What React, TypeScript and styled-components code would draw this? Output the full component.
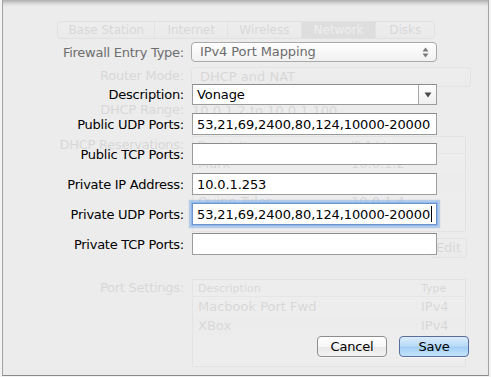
import React from "react";
import styled, { createGlobalStyle } from "styled-components";

const Global = createGlobalStyle`
  html, body { margin: 0; padding: 0; background: #f3f3f3; }
  body { font-family: "DejaVu Sans", "Liberation Sans", sans-serif; -webkit-font-smoothing: antialiased; }
  * { box-sizing: border-box; }
`;

const Page = styled.div`
  width: 491px;
  height: 377px;
  background: #f3f3f3;
  overflow: hidden;
`;

const Frame = styled.div`
  position: relative;
  margin-left: 2px;
  width: 487px;
  height: 376px;
  background: #ececec;
  border-left: 1px solid #a3a3a3;
  border-right: 1px solid #a3a3a3;
  border-bottom: 1px solid #8a8a8a;
  box-shadow: inset 0 6px 5px -4px rgba(0, 0, 0, 0.32);
`;

/* ---------- the window behind the sheet (faded) ---------- */

const Ghost = styled.div`
  opacity: 0.085;
  padding-top: 21px;
  display: flex;
  flex-direction: column;
  font-size: 13px;
  color: #000;
`;

const Tabs = styled.div`
  display: flex;
  margin-left: 54px;
  width: 378px;
  height: 18px;
  border: 1px solid #777;
  border-radius: 4px;
  overflow: hidden;
  background: linear-gradient(#ffffff, #dcdcdc);
`;

const Tab = styled.div<{ $w: number; $on?: boolean }>`
  width: ${(p) => p.$w}px;
  display: flex;
  align-items: center;
  justify-content: center;
  font-size: 12px;
  border-right: 1px solid #888;
  background: ${(p) => (p.$on ? "#5a5a5a" : "transparent")};
  color: ${(p) => (p.$on ? "#fff" : "#000")};
  &:last-child { border-right: none; }
`;

const GRow = styled.div<{ $mt: number; $h: number }>`
  display: flex;
  align-items: center;
  gap: 8px;
  margin-top: ${(p) => p.$mt}px;
  height: ${(p) => p.$h}px;
`;

const GLabel = styled.div`
  width: 181px;
  text-align: right;
  letter-spacing: -0.25px;
  align-self: flex-start;
  line-height: 18px;
`;

const GPopup = styled.div`
  width: 280px;
  height: 20px;
  margin-left: -1px;
  border: 1px solid #888;
  border-radius: 4px;
  padding-left: 8px;
  line-height: 18px;
  background: linear-gradient(#fff, #e6e6e6);
`;

const GTable = styled.div<{ $h: number }>`
  width: 274px;
  height: ${(p) => p.$h}px;
  border: 1px solid #888;
  background: #fff;
  display: flex;
  flex-direction: column;
  font-size: 12px;
`;

const GTRow = styled.div<{ $head?: boolean; $alt?: boolean }>`
  display: flex;
  height: ${(p) => (p.$head ? 17 : 19)}px;
  align-items: center;
  background: ${(p) => (p.$alt ? "#edf3fe" : "transparent")};
  border-bottom: ${(p) => (p.$head ? "1px solid #aaa" : "none")};
  font-size: ${(p) => (p.$head ? 11 : 13)}px;
`;

const GCell = styled.div<{ $w?: number }>`
  padding-left: 5px;
  ${(p) => (p.$w ? `width: ${p.$w}px;` : "flex: 1;")}
`;

const GEditRow = styled.div`
  display: flex;
  justify-content: flex-end;
  margin-top: 6px;
  padding-right: 21px;
`;

const GButton = styled.div`
  width: 37px;
  height: 20px;
  border: 1px solid #888;
  border-radius: 4px;
  text-align: center;
  line-height: 18px;
  background: linear-gradient(#fff, #e0e0e0);
`;

/* ---------- the sheet ---------- */

const Sheet = styled.div`
  position: absolute;
  inset: 0;
  display: flex;
  flex-direction: column;
  padding-top: 42px;
  font-size: 13px;
  color: #000;
`;

const Row = styled.div<{ $mt: number; $h: number }>`
  display: flex;
  align-items: center;
  gap: 8px;
  margin-top: ${(p) => p.$mt}px;
  height: ${(p) => p.$h}px;
`;

const Label = styled.div<{ $dim?: boolean }>`
  width: 181px;
  text-align: right;
  letter-spacing: -0.25px;
  color: ${(p) => (p.$dim ? "#6e6e6e" : "#000")};
`;

const Popup = styled.div`
  position: relative;
  width: 246px;
  height: 20px;
  margin-left: -1px;
  border: 1px solid #a9a9a9;
  border-radius: 4px;
  padding-left: 8px;
  line-height: 18px;
  color: #6c6c6c;
  letter-spacing: -0.1px;
  background: linear-gradient(#fefefe, #f1f1f1);
  display: flex;
  align-items: center;
  justify-content: space-between;
  padding-right: 7px;
`;

const Field = styled.div<{ $h: number; $focus?: boolean }>`
  width: 245px;
  height: ${(p) => p.$h}px;
  background: #fff;
  border: 1px solid ${(p) => (p.$focus ? "#6d94cc" : "#9c9c9c")};
  border-top-color: ${(p) => (p.$focus ? "#6d94cc" : "#8c8c8c")};
  box-shadow: ${(p) =>
    p.$focus ? "0 0 0 1px #8fb7ec, 0 0 1px 3px rgba(132, 176, 232, 0.55)" : "none"};
  display: flex;
  align-items: center;
  padding-left: 4px;
  letter-spacing: -0.1px;
  white-space: nowrap;
  overflow: hidden;
`;

const ComboText = styled.div`
  flex: 1;
`;

const ComboButton = styled.div`
  width: 18px;
  align-self: stretch;
  border-left: 1px solid #a9a9a9;
  background: linear-gradient(#ffffff, #efefef);
  display: flex;
  align-items: center;
  justify-content: center;
`;

const Caret = styled.span`
  display: inline-block;
  width: 1px;
  height: 16px;
  background: #000;
  margin-left: 1px;
`;

const Buttons = styled.div`
  margin-top: auto;
  display: flex;
  justify-content: flex-end;
  gap: 12px;
  padding: 0 19px 18px 0;
`;

const Button = styled.div<{ $primary?: boolean }>`
  width: 70px;
  height: 21px;
  border-radius: 4px;
  border: 1px solid ${(p) => (p.$primary ? "#5a6e9e" : "#8d8d8d")};
  background: ${(p) =>
    p.$primary
      ? "linear-gradient(#dcecfb 0%, #b9dbf8 45%, #a3cff5 55%, #c4e4fd 100%)"
      : "linear-gradient(#ffffff 0%, #f7f7f7 50%, #e9e9e9 55%, #f3f3f3 100%)"};
  box-shadow: 0 1px 0 rgba(255, 255, 255, 0.6);
  display: flex;
  align-items: center;
  justify-content: center;
  font-size: 13px;
  letter-spacing: -0.2px;
  color: #000;
`;

const Stepper = () => (
  <svg width="7" height="11" viewBox="0 0 7 11">
    <path d="M3.5 0.5 L6.5 4.5 H0.5 Z" fill="#7a7a7a" />
    <path d="M3.5 10.5 L6.5 6.5 H0.5 Z" fill="#7a7a7a" />
  </svg>
);

const DownArrow = () => (
  <svg width="8" height="6" viewBox="0 0 8 6">
    <path d="M0.5 0.5 H7.5 L4 5.5 Z" fill="#4a4a4a" />
  </svg>
);

const fields: { label: string; value: string; focus?: boolean }[] = [
  { label: "Public UDP Ports:", value: "53,21,69,2400,80,124,10000-20000" },
  { label: "Public TCP Ports:", value: "" },
  { label: "Private IP Address:", value: "10.0.1.253" },
  { label: "Private UDP Ports:", value: "53,21,69,2400,80,124,10000-20000", focus: true },
  { label: "Private TCP Ports:", value: "" },
];

export default function App() {
  return (
    <Page>
      <Global />
      <Frame>
        <Ghost aria-hidden>
          <Tabs>
            <Tab $w={98}>Base Station</Tab>
            <Tab $w={73}>Internet</Tab>
            <Tab $w={74}>Wireless</Tab>
            <Tab $w={75} $on>Network</Tab>
            <Tab $w={58}>Disks</Tab>
          </Tabs>
          <GRow $mt={28} $h={20}>
            <GLabel>Router Mode:</GLabel>
            <GPopup>DHCP and NAT</GPopup>
          </GRow>
          <GRow $mt={14} $h={18}>
            <GLabel>DHCP Range:</GLabel>
            <div>10.0.1.2 to 10.0.1.100</div>
          </GRow>
          <GRow $mt={17} $h={96}>
            <GLabel>DHCP Reservations:</GLabel>
            <GTable $h={96}>
              <GTRow $head>
                <GCell $w={153}>Description</GCell>
                <GCell>IP Address</GCell>
              </GTRow>
              <GTRow>
                <GCell $w={153}>Mark</GCell>
                <GCell>10.0.1.2</GCell>
              </GTRow>
              <GTRow $alt>
                <GCell $w={153}>Laptop</GCell>
                <GCell>10.0.1.3</GCell>
              </GTRow>
              <GTRow>
                <GCell $w={153}>Quinn Tyler</GCell>
                <GCell>10.0.1.4</GCell>
              </GTRow>
            </GTable>
          </GRow>
          <GEditRow>
            <GButton>Edit</GButton>
          </GEditRow>
          <GRow $mt={21} $h={88}>
            <GLabel>Port Settings:</GLabel>
            <GTable $h={88}>
              <GTRow $head>
                <GCell $w={223}>Description</GCell>
                <GCell>Type</GCell>
              </GTRow>
              <GTRow>
                <GCell $w={223}>Macbook Port Fwd</GCell>
                <GCell>IPv4</GCell>
              </GTRow>
              <GTRow $alt>
                <GCell $w={223}>XBox</GCell>
                <GCell>IPv4</GCell>
              </GTRow>
            </GTable>
          </GRow>
        </Ghost>

        <Sheet>
          <Row $mt={0} $h={20}>
            <Label $dim>Firewall Entry Type:</Label>
            <Popup>
              <span>IPv4 Port Mapping</span>
              <Stepper />
            </Popup>
          </Row>
          <Row $mt={22} $h={21}>
            <Label>Description:</Label>
            <Field $h={21}>
              <ComboText>Vonage</ComboText>
              <ComboButton>
                <DownArrow />
              </ComboButton>
            </Field>
          </Row>
          {fields.map((f) => (
            <Row key={f.label} $mt={8} $h={22}>
              <Label>{f.label}</Label>
              <Field $h={22} $focus={f.focus}>
                {f.value}
                {f.focus && <Caret />}
              </Field>
            </Row>
          ))}
          <Buttons>
            <Button>Cancel</Button>
            <Button $primary>Save</Button>
          </Buttons>
        </Sheet>
      </Frame>
    </Page>
  );
}
